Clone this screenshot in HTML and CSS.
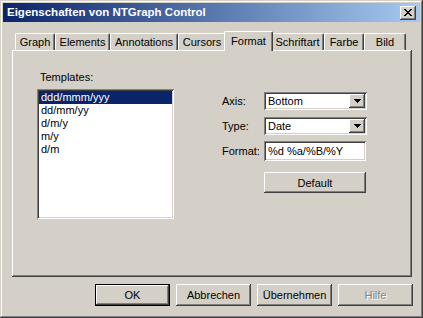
FILE: index.html
```html
<!DOCTYPE html>
<html>
<head>
<meta charset="utf-8">
<link rel="stylesheet" href="styles.css">
</head>
<body>
<div class="window">
  <div class="titlebar">
    <span class="title">Eigenschaften von NTGraph Control</span>
    <span class="close"><svg width="8" height="7" viewBox="0 0 8 7"><path d="M0 0h2v1H0z M6 0h2v1H6z M1 1h2v1H1z M5 1h2v1H5z M2 2h4v1H2z M3 3h2v1H3z M2 4h4v1H2z M1 5h2v1H1z M5 5h2v1H5z M0 6h2v1H0z M6 6h2v1H6z" fill="#000"/></svg></span>
  </div>
  <div class="body">
    <div class="tabs">
      <div class="tab w-graph">Graph</div>
      <div class="tab w-elements">Elements</div>
      <div class="tab w-annot">Annotations</div>
      <div class="tab w-cursors">Cursors</div>
      <div class="tab active w-format">Format</div>
      <div class="tab w-schrift">Schriftart</div>
      <div class="tab w-farbe">Farbe</div>
      <div class="tab w-bild">Bild</div>
    </div>
    <div class="panel">
      <div class="left">
        <div class="label templates-label">Templates:</div>
        <div class="listbox">
          <div class="item selected">ddd/mmm/yyy</div>
          <div class="item">dd/mm/yy</div>
          <div class="item">d/m/y</div>
          <div class="item">m/y</div>
          <div class="item">d/m</div>
        </div>
      </div>
      <div class="right">
        <div class="row row-axis">
          <span class="label field-label">Axis:</span>
          <div class="combo">
            <span class="combo-text">Bottom</span>
            <span class="drop"><svg width="7" height="4" viewBox="0 0 7 4"><path d="M0 0h7v1H0z M1 1h5v1H1z M2 2h3v1H2z M3 3h1v1H3z" fill="#000"/></svg></span>
          </div>
        </div>
        <div class="row row-type">
          <span class="label field-label">Type:</span>
          <div class="combo">
            <span class="combo-text">Date</span>
            <span class="drop"><svg width="7" height="4" viewBox="0 0 7 4"><path d="M0 0h7v1H0z M1 1h5v1H1z M2 2h3v1H2z M3 3h1v1H3z" fill="#000"/></svg></span>
          </div>
        </div>
        <div class="row row-format">
          <span class="label field-label">Format:</span>
          <div class="edit">%d %a/%B/%Y</div>
        </div>
        <div class="row row-default">
          <div class="btn btn-default">Default</div>
        </div>
      </div>
    </div>
    <div class="buttons">
      <div class="btn btn-main btn-ok">OK</div>
      <div class="btn btn-main">Abbrechen</div>
      <div class="btn btn-main">Übernehmen</div>
      <div class="btn btn-main btn-disabled">Hilfe</div>
    </div>
  </div>
</div>
</body>
</html>
```

FILE: styles.css
```css
* { box-sizing: border-box; }
html, body { margin: 0; padding: 0; }
body {
  width: 423px;
  height: 318px;
  overflow: hidden;
  font-family: "Liberation Sans", Arial, sans-serif;
  font-size: 11px;
  color: #000;
  background: #D4D0C8;
}
.window {
  width: 423px;
  height: 318px;
  padding: 3px;
  background: #D4D0C8;
  box-shadow: inset -1px -1px 0 #404040, inset 1px 1px 0 #D4D0C8, inset -2px -2px 0 #808080, inset 2px 2px 0 #fff;
  display: flex;
  flex-direction: column;
}
.titlebar {
  height: 19px;
  flex: none;
  display: flex;
  align-items: center;
  justify-content: space-between;
  padding: 0 4px 0 4px;
  background: linear-gradient(90deg, #0A246A 0%, #A6CAF0 100%);
  color: #fff;
}
.title {
  font-weight: bold;
  font-size: 11.5px;
  line-height: 19px;
}
.close {
  width: 16px;
  height: 14px;
  display: flex;
  align-items: center;
  justify-content: center;
  background: #D4D0C8;
  box-shadow: inset -1px -1px 0 #404040, inset 1px 1px 0 #fff, inset -2px -2px 0 #808080;
}
.body {
  flex: 1;
  padding: 9px 8px 0 9px;
  display: flex;
  flex-direction: column;
}
.tabs {
  display: flex;
  align-items: flex-end;
  height: 19px;
  padding-left: 3px;
  position: relative;
  z-index: 1;
}
.tab {
  height: 17px;
  display: flex;
  align-items: center;
  justify-content: center;
  background: #D4D0C8;
  border-left: 1px solid #fff;
  border-top: 1px solid #fff;
  border-right: 1px solid #404040;
  box-shadow: inset -1px 0 0 #808080;
  border-radius: 2px 2px 0 0;
  padding-bottom: 1px;
}
.tab.active {
  height: 20px;
  margin: 0 -2px -1px;
  position: relative;
  z-index: 2;
  padding-bottom: 2px;
}
.w-graph { width: 40px; }
.w-elements { width: 55px; }
.w-annot { width: 68px; }
.w-cursors { width: 48px; }
.w-format { width: 49px; }
.w-schrift { width: 53px; }
.w-farbe { width: 40px; }
.w-bild { width: 42px; }
.panel {
  height: 227px;
  flex: none;
  display: flex;
  padding: 21px 0 0 25px;
  box-shadow: inset -1px -1px 0 #404040, inset 1px 1px 0 #fff, inset -2px -2px 0 #808080;
}
.label { line-height: 13px; }
.templates-label { margin-left: 3px; }
.listbox {
  margin-top: 5px;
  width: 137px;
  height: 130px;
  padding: 2px;
  background: #fff;
  box-shadow: inset 1px 1px 0 #808080, inset -1px -1px 0 #fff, inset 2px 2px 0 #404040, inset -2px -2px 0 #D4D0C8;
}
.item {
  height: 13px;
  line-height: 13px;
  padding-left: 2px;
}
.item.selected {
  background: #0A246A;
  color: #fff;
}
.right {
  margin-left: 48px;
  margin-top: 21px;
  display: flex;
  flex-direction: column;
}
.row {
  display: flex;
  align-items: center;
}
.field-label { width: 42px; }
.row-type { margin-top: 7px; }
.row-format { margin-top: 6px; }
.row-default { margin-top: 11px; padding-left: 42px; }
.combo {
  width: 103px;
  height: 18px;
  padding: 2px;
  display: flex;
  align-items: center;
  background: #fff;
  box-shadow: inset 1px 1px 0 #808080, inset -1px -1px 0 #fff, inset 2px 2px 0 #404040, inset -2px -2px 0 #D4D0C8;
}
.combo-text {
  flex: 1;
  padding-left: 2px;
  line-height: 14px;
}
.drop {
  width: 16px;
  height: 14px;
  display: flex;
  align-items: center;
  justify-content: center;
  background: #D4D0C8;
  box-shadow: inset -1px -1px 0 #404040, inset 1px 1px 0 #fff, inset -2px -2px 0 #808080;
}
.edit {
  width: 102px;
  height: 20px;
  padding: 2px 4px;
  line-height: 16px;
  background: #fff;
  box-shadow: inset 1px 1px 0 #808080, inset -1px -1px 0 #fff, inset 2px 2px 0 #404040, inset -2px -2px 0 #D4D0C8;
}
.btn {
  display: flex;
  align-items: center;
  justify-content: center;
  background: #D4D0C8;
  box-shadow: inset -1px -1px 0 #404040, inset 1px 1px 0 #fff, inset -2px -2px 0 #808080;
}
.btn-default {
  width: 102px;
  height: 21px;
}
.buttons {
  display: flex;
  justify-content: flex-end;
  gap: 6px;
  margin-top: 7px;
  margin-right: -1px;
}
.btn-main {
  width: 75px;
  height: 22px;
}
.btn-ok {
  border: 1px solid #000;
}
.btn-disabled {
  color: #808080;
  text-shadow: 1px 1px 0 #fff;
}
```
